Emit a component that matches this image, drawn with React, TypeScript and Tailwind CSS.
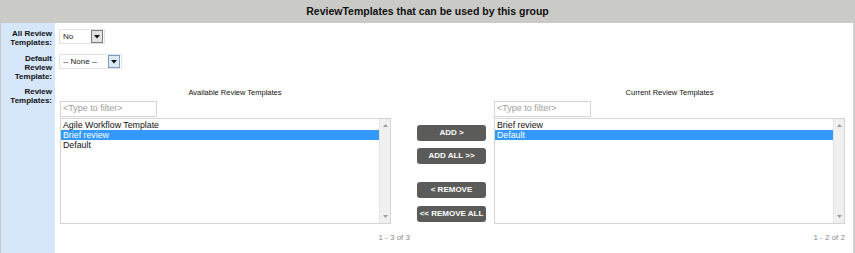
import React from "react";

const font = { fontFamily: '"Liberation Sans", Arial, sans-serif' };

function Select({ value, width, blue }: { value: string; width: string; blue?: boolean }) {
  return (
    <div className={`flex h-[15px] ${width} items-center border border-[#e2e2e2] bg-white`}>
      <span className="flex-1 pl-[3px] text-[8px] leading-none text-[#222]">{value}</span>
      <div
        className={`mr-[1px] flex h-[13px] w-[12px] items-center justify-center border ${
          blue ? "border-[#7a9cc2] bg-[#dbe8f5]" : "border-[#7b7b7b] bg-[#e3e3e3]"
        }`}
      >
        <svg width="6" height="4" viewBox="0 0 6 4">
          <path d="M0 0 L6 0 L3 3.5 Z" fill="#111" />
        </svg>
      </div>
    </div>
  );
}

function ListBox({ items, selected, width }: { items: string[]; selected: number; width: string }) {
  return (
    <div className={`flex h-[106px] ${width} border border-[#d4d4d4] bg-white`}>
      <div className="flex-1 pt-[1px]">
        {items.map((it, i) => (
          <div
            key={it}
            className={`h-[10px] pl-[2px] text-[8.8px] leading-[10px] ${
              i === selected ? "bg-[#3399ff] text-white" : "text-[#111]"
            }`}
          >
            {it}
          </div>
        ))}
      </div>
      <div className="flex w-[11px] flex-col items-center justify-between border-l border-[#e4e4e4] bg-[#f0f0f0] py-[5px]">
        <svg width="5" height="3" viewBox="0 0 5 3">
          <path d="M0 3 L5 3 L2.5 0 Z" fill="#9a9a9a" />
        </svg>
        <svg width="5" height="3" viewBox="0 0 5 3">
          <path d="M0 0 L5 0 L2.5 3 Z" fill="#9a9a9a" />
        </svg>
      </div>
    </div>
  );
}

function Filter() {
  return (
    <div className="flex h-[16px] w-[97px] items-center border border-[#d4d4d4] bg-white pl-[2px] text-[9px] text-[#a0a0a0]">
      &lt;Type to filter&gt;
    </div>
  );
}

function Btn({ label }: { label: string }) {
  return (
    <div className="flex h-[16px] w-[69px] items-center justify-center rounded-[3px] bg-[#5b5b59] text-[8px] font-bold text-white">
      {label}
    </div>
  );
}

export default function App() {
  return (
    <div className="flex h-[253px] w-[855px] flex-col bg-white" style={font}>
      <div className="flex h-[23px] items-center justify-center bg-[#cacac7] text-[10.5px] font-bold text-[#111]">
        ReviewTemplates that can be used by this group
      </div>
      <div className="flex flex-1 border-l border-[#c8c8c8] border-r-2 border-r-[#d0d0d0]">
        <div className="flex w-[54px] flex-col items-end bg-[#d6e6fb] pr-[3px] pt-[6px] text-right text-[8px] font-bold leading-[9px] text-[#111]">
          <div className="h-[25px]">
            All Review
            <br />
            Templates:
          </div>
          <div className="h-[33px]">
            Default
            <br />
            Review
            <br />
            Template:
          </div>
          <div>
            Review
            <br />
            Templates:
          </div>
        </div>
        <div className="flex flex-1 flex-col pl-[4px] pt-[6px]">
          <div className="h-[25px]">
            <Select value="No" width="w-[46px]" />
          </div>
          <div className="h-[34px]">
            <Select value="-- None --" width="w-[63px]" blue />
          </div>
          <div className="flex">
            <div className="flex w-[351px] flex-col pl-[1px]">
              <div className="text-center text-[7.5px] leading-[10px] text-[#111]">Available Review Templates</div>
              <div className="mt-[3px]">
                <Filter />
              </div>
              <div className="mt-[1px]">
                <ListBox items={["Agile Workflow Template", "Brief review", "Default"]} selected={1} width="w-[331px]" />
              </div>
              <div className="mt-[8px] text-right text-[8px] text-[#8a8a8a]">1 - 3 of 3</div>
            </div>
            <div className="flex w-[84px] flex-col pl-[7px] pt-[37px]">
              <div className="flex flex-col gap-[7px]">
                <Btn label="ADD >" />
                <Btn label="ADD ALL >>" />
              </div>
              <div className="mt-[18px] flex flex-col gap-[8px]">
                <Btn label="< REMOVE" />
                <Btn label="<< REMOVE ALL" />
              </div>
            </div>
            <div className="flex w-[351px] flex-col">
              <div className="text-center text-[7.5px] leading-[10px] text-[#111]">Current Review Templates</div>
              <div className="mt-[3px]">
                <Filter />
              </div>
              <div className="mt-[1px]">
                <ListBox items={["Brief review", "Default"]} selected={1} width="w-[351px]" />
              </div>
              <div className="mt-[8px] text-right text-[8px] text-[#8a8a8a]">1 - 2 of 2</div>
            </div>
          </div>
        </div>
      </div>
    </div>
  );
}
